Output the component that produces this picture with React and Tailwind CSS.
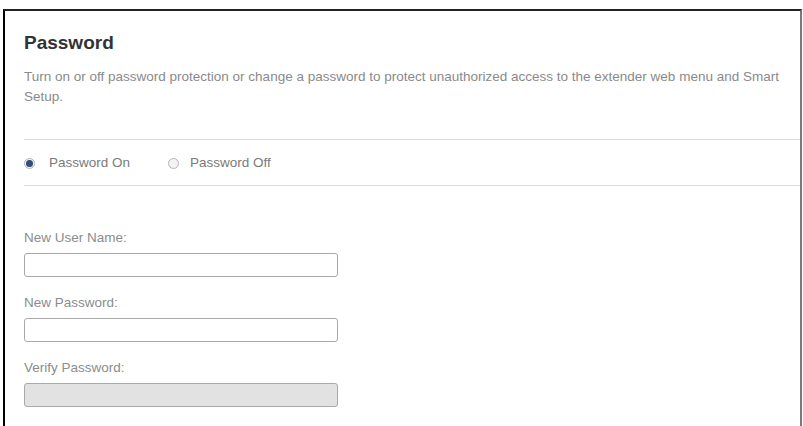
import React from 'react';

// Radio dot, drawn by hand to look like the old router UI
const Radio = ({ checked }) => (
  <span className="flex h-[11px] w-[11px] items-center justify-center rounded-full border border-[#b5b5b5] bg-[#f3f3f3]">
    {checked && <span className="h-[7px] w-[7px] rounded-full bg-[#2f4d78]"></span>}
  </span>
);

const Field = ({ label, disabled }) => (
  <div className="flex flex-col">
    <label className="h-[18px] text-[13.5px] leading-[18px] text-[#8c8c8c]">{label}</label>
    <input
      type="text"
      disabled={disabled}
      className={`mt-[6px] h-[24px] w-[314px] rounded-[3px] border border-[#a9a9a9] ${disabled ? 'bg-[#e2e2e2]' : 'bg-white'}`}
    />
  </div>
);

export default function App() {
  return (
    <div className="h-[426px] w-[803px] overflow-hidden bg-white font-['Liberation_Sans',Arial,sans-serif]">
      <div className="ml-[3px] mt-[9px] h-[430px] w-[799px] border-l-[2px] border-t-[2px] border-r-[2px] border-l-black border-t-[#222] border-r-[#7a7a7a] pl-[19px]">
        <h1 className="mt-[20px] h-[24px] text-[19px] font-bold leading-[24px] text-[#333]">Password</h1>
        <p className="mt-[12px] pr-[12px] text-[13.5px] leading-[20px] text-[#8a8a8a]">
          Turn on or off password protection or change a password to protect unauthorized access to the extender web menu and Smart Setup.
        </p>
        <div className="mt-[32px] border-t border-[#dcdcdc]"></div>
        <div className="flex h-[45px] items-center pt-[1px] text-[13.5px] text-[#7a7a7a]">
          <div className="flex items-center gap-[14px]">
            <Radio checked />
            <span>Password On</span>
          </div>
          <div className="ml-[38px] flex items-center gap-[11px]">
            <Radio />
            <span>Password Off</span>
          </div>
        </div>
        <div className="border-t border-[#dcdcdc]"></div>
        <div className="mt-[43px] flex flex-col gap-[17px]">
          <Field label="New User Name:" />
          <Field label="New Password:" />
          <Field label="Verify Password:" disabled />
        </div>
      </div>
    </div>
  );
}
